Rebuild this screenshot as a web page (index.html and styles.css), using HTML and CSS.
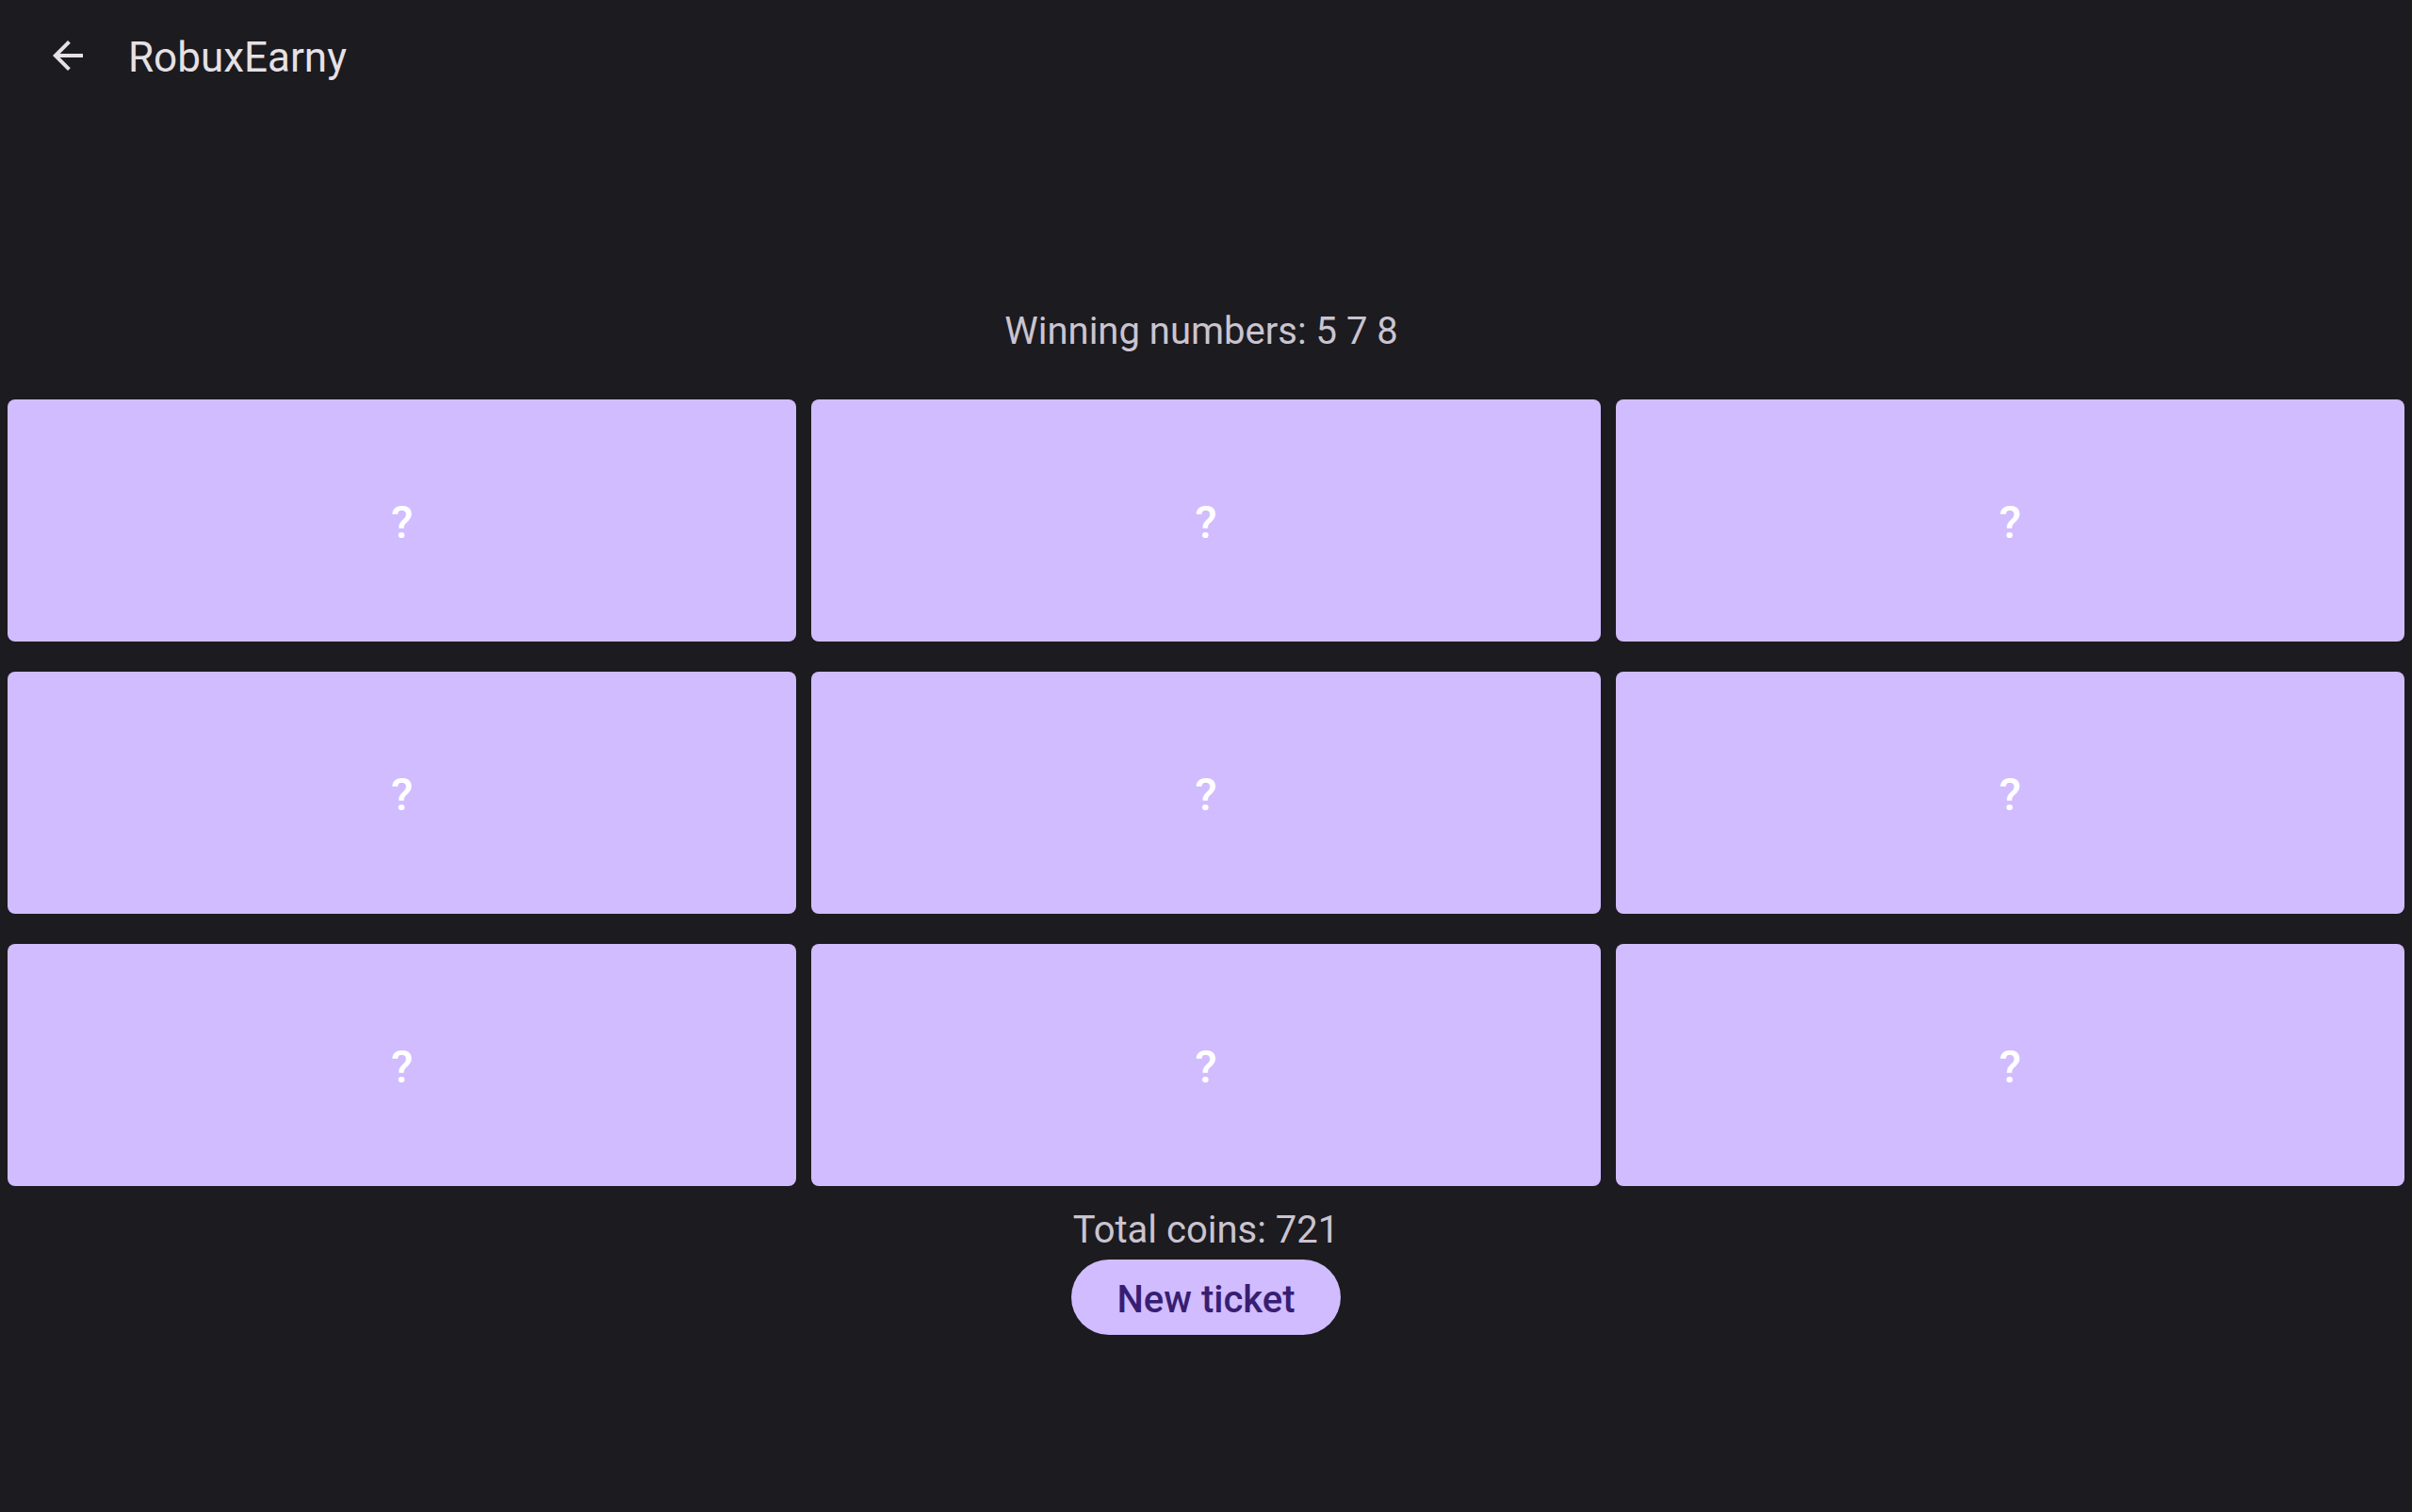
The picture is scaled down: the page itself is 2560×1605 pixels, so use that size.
FILE: index.html
```html
<!DOCTYPE html>
<html lang="en">
<head>
<meta charset="utf-8">
<title>RobuxEarny</title>
<link rel="stylesheet" href="styles.css">
</head>
<body>
<header class="topbar">
  <button class="nav-btn" aria-label="Back">
    <svg class="nav-icon" viewBox="0 0 24 24" width="48" height="48"><path d="M20 11H7.83l5.59-5.59L12 4l-8 8 8 8 1.41-1.41L7.83 13H20v-2z"/></svg>
  </button>
  <h1 class="title">RobuxEarny</h1>
</header>
<main class="content">
  <p class="winning">Winning numbers: 5 7 8&nbsp;</p>
  <div class="grid">
    <div class="cell">?</div>
    <div class="cell">?</div>
    <div class="cell">?</div>
    <div class="cell">?</div>
    <div class="cell">?</div>
    <div class="cell">?</div>
    <div class="cell">?</div>
    <div class="cell">?</div>
    <div class="cell">?</div>
  </div>
  <p class="total">Total coins: 721</p>
  <div class="btn-wrap"><button class="new-ticket">New ticket</button></div>
</main>
</body>
</html>
```
FILE: styles.css
```css
html, body {
  margin: 0;
  padding: 0;
  background: #1c1b1f;
  font-family: Roboto, "Noto Sans", sans-serif;
}
body {
  min-height: 1605px;
}
.topbar {
  height: 118px;
  display: flex;
  align-items: center;
  padding-left: 48px;
}
.nav-btn {
  width: 48px;
  height: 48px;
  padding: 0;
  border: 0;
  background: transparent;
  display: flex;
  align-items: center;
  justify-content: center;
}
.nav-icon {
  display: block;
  fill: #e6e1e5;
}
.title {
  margin: 0 0 0 40px;
  padding-top: 3px;
  font-size: 44px;
  font-weight: 400;
  color: #e6e1e5;
}
.content {
  display: flex;
  flex-direction: column;
  align-items: stretch;
}
.winning {
  margin: 210px 0 0;
  text-align: center;
  font-size: 40px;
  line-height: 47px;
  color: #cac4d0;
}
.grid {
  margin-top: 49px;
  padding: 0 8px;
  display: grid;
  grid-template-columns: repeat(3, 1fr);
  grid-auto-rows: 257px;
  column-gap: 16px;
  row-gap: 32px;
}
.cell {
  background: #d0bcff;
  border-radius: 8px;
  display: flex;
  align-items: center;
  justify-content: center;
  padding-top: 3px;
  color: #ffffff;
  font-size: 48px;
  font-weight: 500;
}
.total {
  margin: 23px 0 0;
  text-align: center;
  font-size: 40px;
  line-height: 47px;
  color: #cac4d0;
}
.btn-wrap {
  display: flex;
  justify-content: center;
  padding: 8px 0;
}
.new-ticket {
  height: 80px;
  padding: 5px 48px 0;
  border: 0;
  border-radius: 40px;
  background: #d0bcff;
  color: #381e72;
  font-family: Roboto, "Noto Sans", sans-serif;
  font-size: 40px;
  font-weight: 500;
}
```
